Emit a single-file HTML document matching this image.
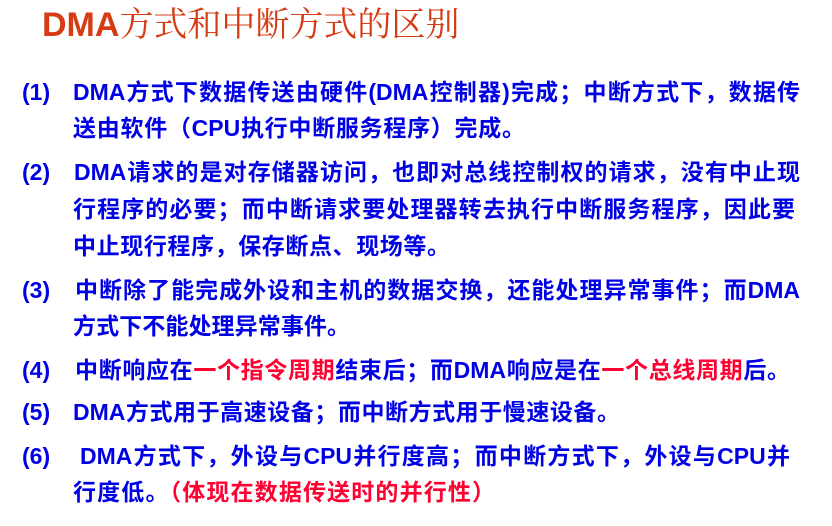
<!DOCTYPE html>
<html><head><meta charset="utf-8"><style>
body{margin:0;width:832px;height:526px;background:#fff;overflow:hidden;position:relative;font-family:"Liberation Sans","Noto Sans CJK SC",sans-serif}
.t{position:absolute;left:42px;top:3px;font-size:34px;color:#d63c14;white-space:nowrap;line-height:44px}
.t b{font-family:"Liberation Sans",sans-serif}
.t span{font-family:"Liberation Serif","Noto Serif CJK SC",serif}
.n,.l{position:absolute;font-size:23px;font-weight:bold;color:#0000e6;white-space:nowrap;line-height:30px}
.n{left:22px}
.l{text-align:justify;text-align-last:justify;overflow:visible}
.r{color:#ff0030}
</style></head><body>
<div class="t"><b>DMA</b><span>方式和中断方式的区别</span></div>

<div class="n" style="top:77px">(1)</div>
<div class="l" style="top:77px;left:73px;width:727px">DMA方式下数据传送由硬件(DMA控制器)完成；中断方式下，数据传</div>
<div class="l" style="top:113px;left:73px;width:452px">送由软件（CPU执行中断服务程序）完成。</div>

<div class="n" style="top:157px">(2)</div>
<div class="l" style="top:157px;left:74px;width:726px">DMA请求的是对存储器访问，也即对总线控制权的请求，没有中止现</div>
<div class="l" style="top:194px;left:73px;width:722px">行程序的必要；而中断请求要处理器转去执行中断服务程序，因此要</div>
<div class="l" style="top:231px;left:73px;width:377px">中止现行程序，保存断点、现场等。</div>

<div class="n" style="top:275px">(3)</div>
<div class="l" style="top:275px;left:75px;width:725px">中断除了能完成外设和主机的数据交换，还能处理异常事件；而DMA</div>
<div class="l" style="top:311px;left:73px;width:277px">方式下不能处理异常事件。</div>

<div class="n" style="top:355px">(4)</div>
<div class="l" style="top:355px;left:75px;width:715px">中断响应在<span class="r">一个指令周期</span>结束后；而DMA响应是在<span class="r">一个总线周期</span>后。</div>

<div class="n" style="top:397px">(5)</div>
<div class="l" style="top:397px;left:73px;width:547px">DMA方式用于高速设备；而中断方式用于慢速设备。</div>

<div class="n" style="top:441px">(6)</div>
<div class="l" style="top:441px;left:80px;width:710px">DMA方式下，外设与CPU并行度高；而中断方式下，外设与CPU并</div>
<div class="l" style="top:477px;left:73px;width:422px">行度低。<span class="r">（体现在数据传送时的并行性）</span></div>
</body></html>
